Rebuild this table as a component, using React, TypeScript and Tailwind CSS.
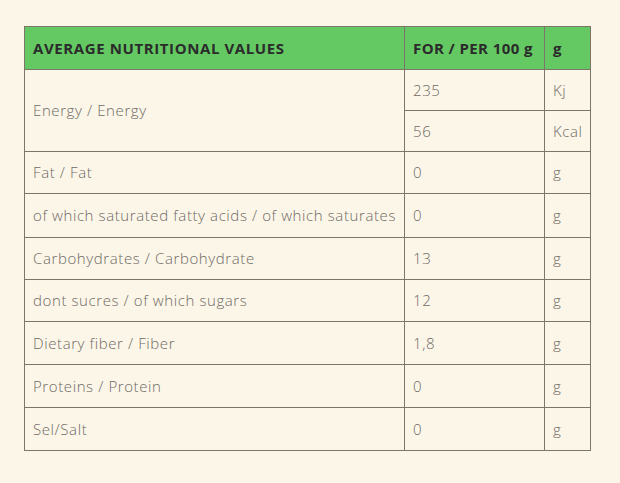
const rows: { label: string; value: string; unit: string; h: string }[] = [
  { label: "Fat / Fat", value: "0", unit: "g", h: "h-[42px]" },
  { label: "of which saturated fatty acids / of which saturates", value: "0", unit: "g", h: "h-[44px]" },
  { label: "Carbohydrates / Carbohydrate", value: "13", unit: "g", h: "h-[42px]" },
  { label: "dont sucres / of which sugars", value: "12", unit: "g", h: "h-[42px]" },
  { label: "Dietary fiber / Fiber", value: "1,8", unit: "g", h: "h-[43px]" },
  { label: "Proteins / Protein", value: "0", unit: "g", h: "h-[43px]" },
  { label: "Sel/Salt", value: "0", unit: "g", h: "h-[43px]" },
];

const cell = "border border-[#7d7668] px-2 align-middle";

export default function App() {
  return (
    <div className="min-h-[483px] w-[620px] bg-[#fcf6e9] pl-6 pt-[26px] font-['Open_Sans',sans-serif]">
      <table className="w-[566px] table-fixed border-collapse text-[15px] tracking-[0.6px] text-[#6e6a64]">
        <colgroup>
          <col className="w-[380px]" />
          <col className="w-[140px]" />
          <col className="w-[46px]" />
        </colgroup>
        <thead>
          <tr className="h-[43px] bg-[#64c863] text-left font-extrabold tracking-[0.6px] text-[#2b2b2b]">
            <th className={cell}>AVERAGE NUTRITIONAL VALUES</th>
            <th className={cell + " whitespace-nowrap tracking-[0.4px]"}>FOR / PER 100 g</th>
            <th className={cell}>g</th>
          </tr>
        </thead>
        <tbody className="font-light">
          <tr className="h-[41px]">
            <td rowSpan={2} className={cell}>
              Energy / Energy
            </td>
            <td className={cell}>235</td>
            <td className={cell}>Kj</td>
          </tr>
          <tr className="h-[41px]">
            <td className={cell}>56</td>
            <td className={cell}>Kcal</td>
          </tr>
          {rows.map((r) => (
            <tr key={r.label} className={r.h}>
              <td className={cell + " whitespace-nowrap"}>{r.label}</td>
              <td className={cell}>{r.value}</td>
              <td className={cell}>{r.unit}</td>
            </tr>
          ))}
        </tbody>
      </table>
    </div>
  );
}
